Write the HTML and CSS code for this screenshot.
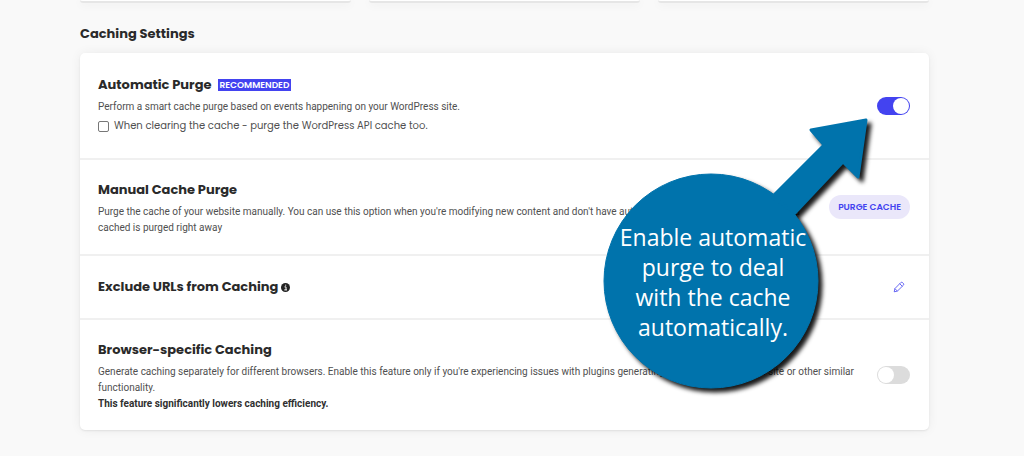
FILE: index.html
```html
<!DOCTYPE html>
<html lang="en">
<head>
<meta charset="utf-8">
<meta name="viewport" content="width=device-width, initial-scale=1">
<title>Caching Settings</title>
<link rel="stylesheet" href="styles.css">
</head>
<body>
<main class="page">
  <div class="tiles"><div class="tile"></div><div class="tile"></div><div class="tile"></div></div>
  <h2 class="heading">Caching Settings</h2>
  <section class="card">
    <div class="row">
      <div class="info">
        <h3 class="title"><label for="auto">Automatic Purge</label> <span class="tag">RECOMMENDED</span></h3>
        <p class="text">Perform a smart cache purge based on events happening on your WordPress site.</p>
        <label class="check"><input class="box" type="checkbox"> When clearing the cache - purge the WordPress API cache too.</label>
      </div>
      <input class="switch" type="checkbox" id="auto" checked>
    </div>
    <div class="row">
      <div class="info">
        <h3 class="title">Manual Cache Purge</h3>
        <p class="text">Purge the cache of your website manually. You can use this option when you're modifying new content and don't have automatic purge on. All that is saved and<br>cached is purged right away</p>
      </div>
      <button class="purge" type="button">PURGE CACHE</button>
    </div>
    <div class="row">
      <div class="info">
        <h3 class="title">Exclude URLs from Caching
          <svg class="info-icon" viewBox="0 0 9 9" aria-hidden="true"><circle cx="4.500" cy="4.500" r="4.500" fill="#232323"/><path d="M3.500 3.900H5v2.900M3.300 6.900h2.700M4.200 2.200h1" fill="none" stroke="#fff" stroke-width="1"/></svg>
        </h3>
      </div>
      <button class="edit" type="button" aria-label="Edit excluded URLs">
        <svg class="edit-icon" viewBox="0 0 12 12" aria-hidden="true"><path d="M1.200 10.800l.7-3.200 5.800-5.900q1-.9 2 0l.6.600q.9 1 0 2L4.400 10.100zM6.700 2.700l2.600 2.600M1.900 7.600l2.500 2.500" fill="none" stroke="#4343f0" stroke-width=".8" stroke-linejoin="round"/></svg>
      </button>
    </div>
    <div class="row">
      <div class="info">
        <h3 class="title"><label for="browser">Browser-specific Caching</label></h3>
        <p class="text">Generate caching separately for different browsers. Enable this feature only if you're experiencing issues with plugins generating mobile versions of the site or other similar<br>functionality.</p>
        <p class="text strong">This feature significantly lowers caching efficiency.</p>
      </div>
      <input class="switch" type="checkbox" id="browser">
    </div>
    <aside class="callout">
      <svg class="shape" viewBox="0 0 277 285" aria-hidden="true">
        <g fill="#0073ac" stroke="#0073ac" stroke-linejoin="round"><circle cx="108" cy="167" r="107"/><path d="M169 83L221 31 208 16 263 6 255 63 240 48 192 99z" stroke-width="3"/></g>
      </svg>
      <p class="message">Enable automatic<br>purge to deal<br>with the cache<br>automatically.</p>
    </aside>
  </section>
</main>
</body>
</html>
```
FILE: styles.css
```css
* { box-sizing: border-box; }
body {
  margin: 0;
  background: #f9f9f9;
  color: #2a2a2a;
  font-family: Roboto, sans-serif;
}
.page { padding: 0 95px 26px 80px; }
.tiles { display: grid; grid-template-columns: repeat(3, 1fr); gap: 18px; }
.tile {
  height: 3px;
  background: #fff;
  border-bottom: 2px solid #e6e6e6;
  border-radius: 0 0 4px 4px;
  box-shadow: 0 1px 10px rgba(0, 0, 0, 0.08);
}
.heading {
  margin: 19px 0 8px;
  font: 700 13px/23px Poppins, Inter, sans-serif;
}
.card {
  position: relative;
  background: #fff;
  border-radius: 5px;
  box-shadow: 0 1px 2px rgba(0, 0, 0, 0.08), 0 0 12px rgba(0, 0, 0, 0.06);
}
.row {
  display: flex;
  align-items: center;
  justify-content: space-between;
  gap: 16px;
  min-height: 64px;
  padding: 18px 19px 18px 18px;
}
.row:first-child { padding-top: 20px; padding-bottom: 19px; }
.row + .row { border-top: 2px solid #f0f0f0; }
.info { flex: 1; max-width: 760px; }
.title {
  display: flex;
  align-items: center;
  gap: 6px;
  margin: 0 0 2px;
  font: 700 13px/24px Poppins, Inter, sans-serif;
}
.row:nth-child(3) .title { gap: 3px; margin: 0; }
.tag {
  padding: 0 2px;
  background: #4343f0;
  color: #fff;
  font-size: 9px;
  font-weight: 600;
  line-height: 12px;
}
.text { margin: 0; color: #505050; font-size: 10px; line-height: 16px; }
.strong { color: #303030; font-weight: 700; }
.check {
  display: flex;
  align-items: center;
  gap: 5px;
  margin: 3px 0 5px;
  color: #505050;
  font: 400 10px/16px Poppins, Inter, sans-serif;
}
.box {
  appearance: none;
  width: 11px;
  height: 11px;
  margin: 0;
  background: #fff;
  border: 1px solid #777;
  border-radius: 2px;
}
.box:checked { background: #4343f0; }
.switch {
  appearance: none;
  display: flex;
  width: 33px;
  height: 18px;
  margin: 0;
  padding: 1px;
  background: #dcdcdc;
  border-radius: 9px;
}
.switch::before { content: ""; width: 16px; height: 16px; background: #fff; border-radius: 50%; }
.switch:checked { justify-content: flex-end; background: #4343f0; }
.purge {
  padding: 0 9px;
  border: 0;
  border-radius: 12px;
  background: #eae7fa;
  color: #4343f0;
  font: 600 9px/24px Poppins, Inter, sans-serif;
}
.edit { display: flex; margin: 0 5px 0 0; padding: 0; border: 0; background: none; }
.edit-icon { width: 12px; height: 12px; }
.info-icon { width: 9px; height: 9px; }
.callout { position: absolute; top: 61px; right: 49px; width: 277px; height: 285px; pointer-events: none; }
.shape { display: block; width: 277px; height: 285px; overflow: visible; filter: drop-shadow(4px 4px 2px rgba(0, 0, 0, 0.9)); }
.message {
  position: absolute;
  top: 108px;
  left: 0;
  width: 220px;
  margin: 0;
  color: #fff;
  font: 400 23px/30px "Open Sans", sans-serif;
  text-align: center;
}
```
